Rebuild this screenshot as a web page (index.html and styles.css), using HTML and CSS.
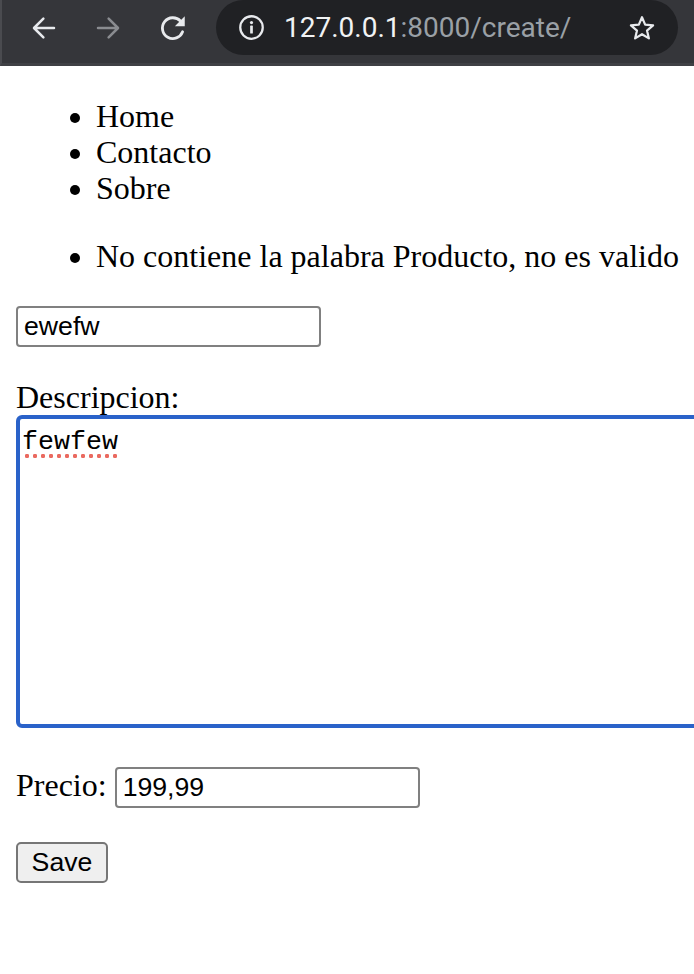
FILE: index.html
```html
<!DOCTYPE html>
<html lang="es">
<head>
<meta charset="utf-8">
<title>Create</title>
<link rel="stylesheet" href="styles.css">
</head>
<body>
<div class="chrome">
  <div class="nav-buttons">
    <svg class="nav-icon" width="30" height="30" viewBox="0 0 24 24"><path d="M20 12H4.5M11.5 4.5L4 12l7.5 7.5" fill="none" stroke="#e8eaed" stroke-width="2" stroke-linecap="round" stroke-linejoin="round"/></svg>
    <svg class="nav-icon" width="30" height="30" viewBox="0 0 24 24"><path d="M4 12h15.5M12.5 4.5L20 12l-7.5 7.5" fill="none" stroke="#8a8c90" stroke-width="2" stroke-linecap="round" stroke-linejoin="round"/></svg>
    <svg class="nav-icon" width="32" height="32" viewBox="0 0 24 24"><path d="M19.2 14.8A7.8 7.8 0 1 1 17.6 6.8" fill="none" stroke="#e8eaed" stroke-width="2.1" stroke-linecap="round"/><path d="M20.8 3.2v7.4h-7.4z" fill="#e8eaed"/></svg>
  </div>
  <div class="omnibox">
    <svg class="info-icon" width="27" height="27" viewBox="0 0 24 24"><circle cx="12" cy="12" r="10" fill="none" stroke="#e8eaed" stroke-width="2"/><circle cx="12" cy="7.6" r="1.4" fill="#e8eaed"/><rect x="10.8" y="10.2" width="2.4" height="7.2" rx="0.6" fill="#e8eaed"/></svg>
    <span class="url"><span class="host">127.0.0.1</span><span class="rest">:8000/create/</span></span>
    <svg class="star-icon" width="28" height="28" viewBox="0 0 24 24"><path d="M12 2.8l2.7 6.3 6.8.6-5.2 4.5 1.6 6.7L12 17.3 6.1 20.9l1.6-6.7L2.5 9.7l6.8-.6z" fill="none" stroke="#e8eaed" stroke-width="1.9" stroke-linejoin="round"/></svg>
  </div>
</div>
<main class="page">
  <ul class="list">
    <li>Home</li>
    <li>Contacto</li>
    <li>Sobre</li>
  </ul>
  <ul class="list">
    <li>No contiene la palabra Producto, no es valido</li>
  </ul>
  <form class="form">
    <p class="field"><input class="text-input" type="text" value="ewefw"></p>
    <p class="field">Descripcion:<br><span class="textarea" role="textbox"><span class="misspelled">fewfew</span></span></p>
    <p class="field">Precio: <input class="text-input" type="text" value="199,99"></p>
    <button class="save" type="button">Save</button>
  </form>
</main>
</body>
</html>
```
FILE: styles.css
```css
html, body {
  margin: 0;
  padding: 0;
  overflow: hidden;
  background: #ffffff;
}

body {
  font-family: "Liberation Serif", "Times New Roman", serif;
  font-size: 32px;
  line-height: 36px;
  color: #000;
}

.chrome {
  height: 63px;
  background: #35363a;
  border-left: 2px solid #4a4b4f;
  border-bottom: 3px solid #3f4044;
  display: flex;
  align-items: flex-start;
}

.nav-buttons {
  display: flex;
  align-items: center;
  gap: 34px;
  height: 56px;
  padding-left: 27px;
  width: 187px;
}

.nav-icon {
  display: block;
}

.omnibox {
  width: 462px;
  height: 55px;
  background: #202124;
  border-radius: 28px;
  display: flex;
  align-items: center;
  padding-left: 22px;
  padding-right: 22px;
  box-sizing: border-box;
}

.info-icon {
  display: block;
  flex: none;
}

.url {
  font-family: Roboto, "Noto Sans", sans-serif;
  font-size: 28px;
  line-height: 32px;
  margin-left: 19px;
  flex: 1;
  white-space: nowrap;
}

.host {
  color: #f1f3f4;
}

.rest {
  color: #9aa0a6;
}

.star-icon {
  display: block;
  flex: none;
}

.page {
  margin: 0 16px;
}

.list {
  margin: 32px 0;
  padding-left: 80px;
  white-space: nowrap;
}

.field {
  margin: 32px 0;
}

.text-input {
  box-sizing: border-box;
  width: 305px;
  height: 41px;
  border: 2px solid #808080;
  border-radius: 4px;
  padding: 0 6px;
  font-family: "Liberation Sans", Arial, sans-serif;
  font-size: 26.67px;
  color: #000;
  background: #fff;
  vertical-align: baseline;
}

.textarea {
  display: inline-block;
  box-sizing: border-box;
  width: 720px;
  height: 313px;
  border: 4px solid #2a62c9;
  border-radius: 6px;
  padding: 8px 2px;
  font-family: "Liberation Mono", "Courier New", monospace;
  font-size: 26.67px;
  line-height: 30px;
  vertical-align: baseline;
  white-space: nowrap;
  overflow: hidden;
}

.misspelled {
  display: inline-block;
  line-height: 30px;
  padding-bottom: 2px;
  background-image: radial-gradient(circle, #ea6a60 1.9px, transparent 2.5px);
  background-size: 8px 6px;
  background-repeat: repeat-x;
  background-position: 1px bottom;
}

.save {
  box-sizing: border-box;
  height: 41px;
  width: 92px;
  border: 2px solid #767676;
  border-radius: 5px;
  background: #efefef;
  font-family: "Liberation Sans", Arial, sans-serif;
  font-size: 26.67px;
  color: #000;
  padding: 0;
  margin-top: 2px;
}
```
